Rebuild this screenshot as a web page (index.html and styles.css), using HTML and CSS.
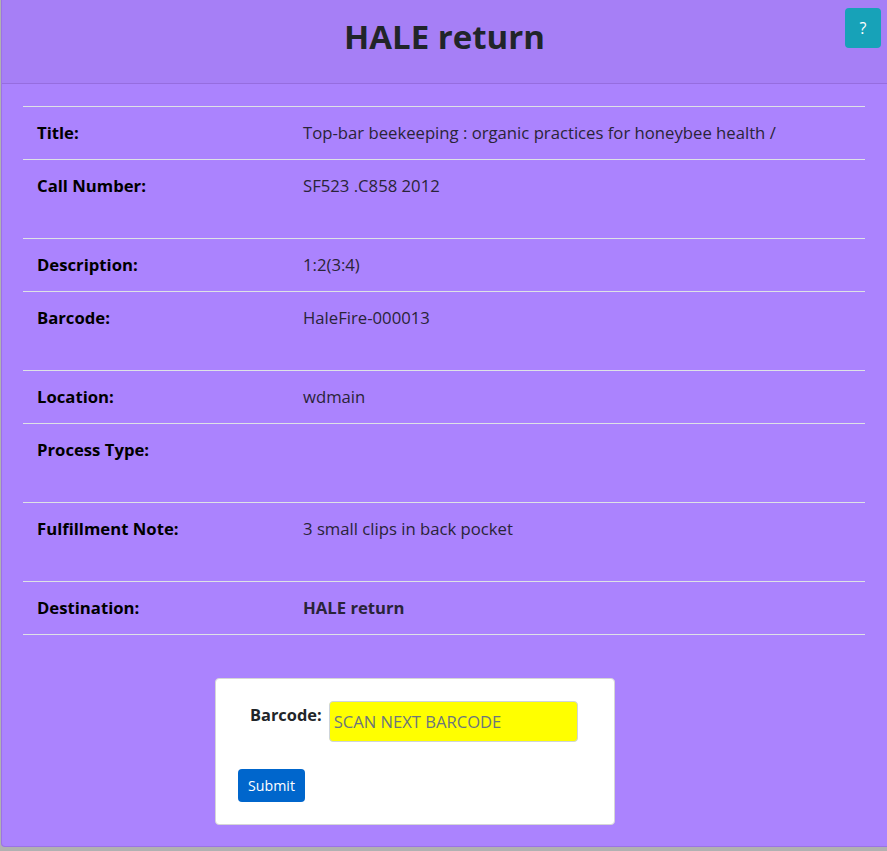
FILE: index.html
```html
<!DOCTYPE html>
<html lang="en">
<head>
<meta charset="utf-8">
<title>HALE return</title>
<link rel="stylesheet" href="styles.css">
</head>
<body>
<div class="card">
  <div class="card-header">
    <h1 class="page-title">HALE return</h1>
    <button class="help-btn" type="button">?</button>
  </div>
  <div class="card-body">
    <div class="details">
      <div class="row"><div class="label">Title:</div><div class="value">Top-bar beekeeping : organic practices for honeybee health /</div></div>
      <div class="row tall"><div class="label">Call Number:</div><div class="value">SF523 .C858 2012</div></div>
      <div class="row"><div class="label">Description:</div><div class="value">1:2(3:4)</div></div>
      <div class="row tall"><div class="label">Barcode:</div><div class="value">HaleFire-000013</div></div>
      <div class="row"><div class="label">Location:</div><div class="value">wdmain</div></div>
      <div class="row tall"><div class="label">Process Type:</div><div class="value"></div></div>
      <div class="row tall"><div class="label">Fulfillment Note:</div><div class="value">3 small clips in back pocket</div></div>
      <div class="row last"><div class="label">Destination:</div><div class="value strong">HALE return</div></div>
    </div>
    <form class="scan-card" onsubmit="return false;">
      <div class="scan-row">
        <label class="scan-label" for="barcode">Barcode:</label>
        <input class="scan-input" id="barcode" type="text" placeholder="SCAN NEXT BARCODE">
      </div>
      <button class="submit-btn" type="submit">Submit</button>
    </form>
  </div>
</div>
</body>
</html>
```

FILE: styles.css
```css
html, body {
  margin: 0;
  padding: 0;
}
body {
  background: #b1b1b1;
  font-family: "Open Sans", "Noto Sans", sans-serif;
  font-size: 16.7px;
  line-height: 24px;
  color: #212529;
  height: 851px;
  overflow: hidden;
}
.card {
  margin-left: 1px;
  height: 846px;
  border: 1px solid #9b73e6;
  border-right: none;
  border-top: none;
  border-radius: 0 0 0 4px;
  background: #ab83fe;
  position: relative;
}
.card-header {
  background: #a67ff6;
  border-bottom: 1px solid #966ddf;
  box-sizing: border-box;
  height: 84px;
  padding-top: 18px;
}
.page-title {
  margin: 0;
  text-align: center;
  font-size: 33px;
  line-height: 38px;
  font-weight: 700;
  color: #212529;
}
.help-btn {
  position: absolute;
  top: 8px;
  right: 6px;
  width: 36px;
  height: 40px;
  border: none;
  border-radius: 4px;
  background: #17a2b8;
  color: #fff;
  font-family: inherit;
  font-size: 16px;
  padding: 0;
}
.card-body {
  padding: 22px 22px 0 21px;
}
.details {
  border-bottom: 1px solid #dee2e6;
}
.row {
  display: flex;
  border-top: 1px solid #dee2e6;
  padding: 14px 14px;
  height: 24px;
}
.row.tall {
  height: 50px;
}
.label {
  width: 266px;
  font-weight: 700;
  color: #000;
}
.value {
  flex: 1;
  color: #2a2438;
}
.value.strong {
  font-weight: 700;
}
.scan-card {
  margin: 43px 0 0 192px;
  width: 354px;
  height: 123px;
  background: #fff;
  border: 1px solid #d6d6d6;
  border-radius: 4px;
  padding: 22px 22px 0 22px;
  box-sizing: content-box;
}
.scan-row {
  display: flex;
  align-items: flex-start;
}
.scan-label {
  font-weight: 700;
  font-size: 16.4px;
  margin-left: 12px;
  margin-top: 2px;
  margin-right: 7px;
}
.scan-input {
  width: 249px;
  height: 41px;
  box-sizing: border-box;
  background: #ffff00;
  border: 1px solid #ced4da;
  border-radius: 4px;
  padding: 6px 4px;
  font-family: inherit;
  font-size: 16.6px;
  color: #495057;
}
.scan-input::placeholder {
  color: #6c757d;
}
.submit-btn {
  display: block;
  margin-top: 27px;
  height: 33px;
  padding: 0 10px;
  background: #0066cc;
  color: #fff;
  border: none;
  border-radius: 4px;
  font-family: inherit;
  font-size: 14.2px;
}
```
